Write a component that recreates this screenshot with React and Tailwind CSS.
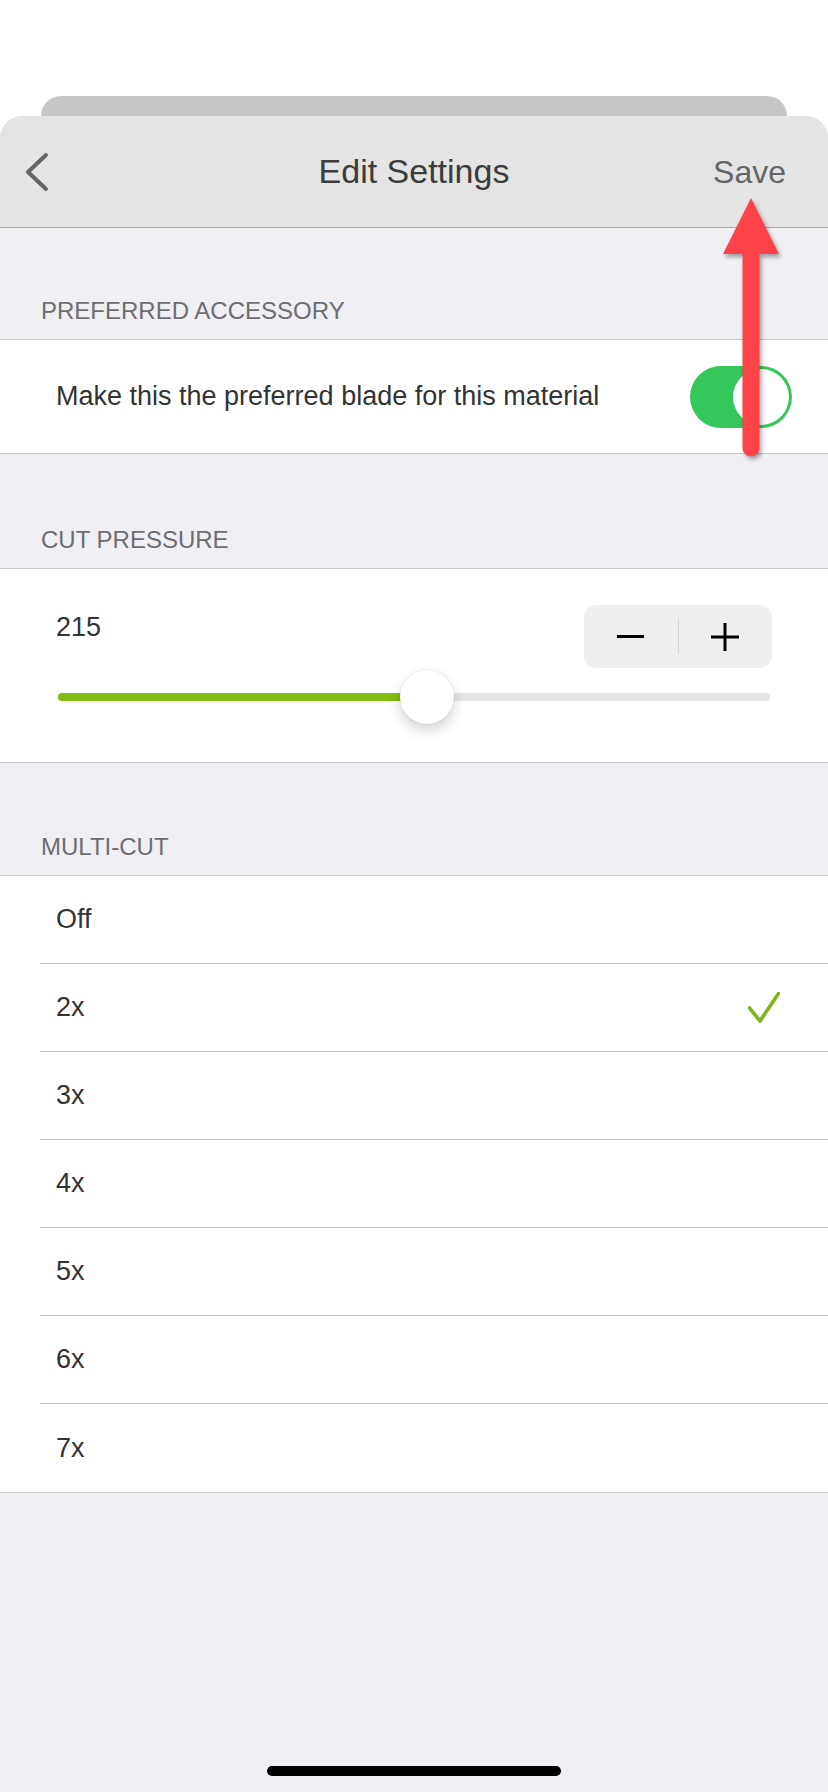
const options = ["Off", "2x", "3x", "4x", "5x", "6x", "7x"];

function SectionHeader({ label, height }) {
  return (
    <div
      className="flex items-end px-[41px] pb-[16px] text-[24px] leading-none text-[#6d6d72]"
      style={{ height }}
    >
      {label}
    </div>
  );
}

function Toggle() {
  return (
    <div className="relative w-[102px] h-[62px] rounded-full bg-[#34c759]">
      <div className="absolute right-[3px] top-[3px] w-[56px] h-[56px] rounded-full bg-white" />
    </div>
  );
}

function Check() {
  return (
    <svg width="32" height="31" viewBox="0 0 32 31" fill="none">
      <path
        d="M1.5 16 L12 29 L30.5 1.5"
        stroke="#7fb51d"
        strokeWidth="3.6"
        strokeLinecap="round"
        strokeLinejoin="round"
      />
    </svg>
  );
}

export default function App() {
  return (
    <div className="relative min-h-screen flex flex-col bg-white font-['Liberation_Sans',Arial,sans-serif] text-[#333]">
      {/* card stacked behind */}
      <div className="mt-[96px] mx-[41px] h-[20px] rounded-t-[20px] bg-[#c6c6c8]" />

      {/* sheet */}
      <div className="flex-1 flex flex-col rounded-t-[22px] overflow-hidden bg-[#efeff4]">
        <div className="grid grid-cols-[1fr_auto_1fr] items-center h-[112px] bg-[#e4e4e4] border-b border-[#a9a9a9]">
          <div className="pl-[24px]">
            <svg width="28" height="40" viewBox="0 0 28 40" fill="none">
              <path
                d="M22 3 L4 20 L22 37"
                stroke="#666"
                strokeWidth="4"
                strokeLinecap="round"
                strokeLinejoin="round"
              />
            </svg>
          </div>
          <div className="text-[34px] text-[#3c3c3c]">Edit Settings</div>
          <div className="justify-self-end pr-[42px] text-[32px] text-[#666]">Save</div>
        </div>

        <SectionHeader label="PREFERRED ACCESSORY" height={111} />
        <div className="flex items-center justify-between h-[115px] pl-[56px] pr-[36px] bg-white border-y border-[#c8c7cc]">
          <span className="text-[27px]">Make this the preferred blade for this material</span>
          <Toggle />
        </div>

        <SectionHeader label="CUT PRESSURE" height={114} />
        <div className="px-[56px] pt-[36px] pb-[61px] bg-white border-y border-[#c8c7cc]">
          <div className="flex items-start justify-between">
            <span className="mt-[9px] text-[27px] leading-none">215</span>
            <div className="flex items-center w-[188px] h-[63px] rounded-[12px] bg-[#efefef]">
              <div className="flex-1 flex justify-center">
                <div className="w-[27px] h-[3px] bg-black" />
              </div>
              <div className="w-px h-[35px] bg-[#d5d5d5]" />
              <div className="flex-1 flex justify-center">
                <svg width="28" height="28" viewBox="0 0 28 28">
                  <path d="M14 0 V28 M0 14 H28" stroke="#000" strokeWidth="3" />
                </svg>
              </div>
            </div>
          </div>
          <div className="relative mt-[25px] ml-[2px] mr-[2px] h-[8px] rounded-full bg-[#e5e5e5]">
            <div className="h-full w-[369px] rounded-full bg-[#84bd14]" />
            <div className="absolute left-[342px] top-[-23px] w-[54px] h-[54px] rounded-full bg-white shadow-[0_6px_14px_rgba(0,0,0,0.18),0_0_2px_rgba(0,0,0,0.12)]" />
          </div>
        </div>

        <SectionHeader label="MULTI-CUT" height={112} />
        <div className="bg-white border-t border-[#c8c7cc]">
          {options.map((o, i) => {
            const last = i === options.length - 1;
            return (
              <div key={o} className={last ? "pl-[40px] border-b border-[#c8c7cc]" : "pl-[40px]"}>
                <div
                  className={
                    "flex items-center justify-between h-[88px] pl-[16px] pr-[48px] text-[27px] " +
                    (last ? "" : "border-b border-[#c8c7cc]")
                  }
                >
                  <span>{o}</span>
                  {o === "2x" && <Check />}
                </div>
              </div>
            );
          })}
        </div>

        <div className="flex-1" />
        <div className="mx-auto mb-[16px] w-[294px] h-[10px] rounded-full bg-black" />
      </div>

      {/* red annotation arrow */}
      <svg
        className="absolute left-[712px] top-[192px] drop-shadow-[2px_3px_2px_rgba(0,0,0,0.35)]"
        width="80"
        height="272"
        viewBox="0 0 80 272"
      >
        <path d="M39 6 L67 62 L11 62 Z" fill="#fd4348" />
        <path d="M39 60 V256" stroke="#fd4348" strokeWidth="17" strokeLinecap="round" />
      </svg>
    </div>
  );
}
